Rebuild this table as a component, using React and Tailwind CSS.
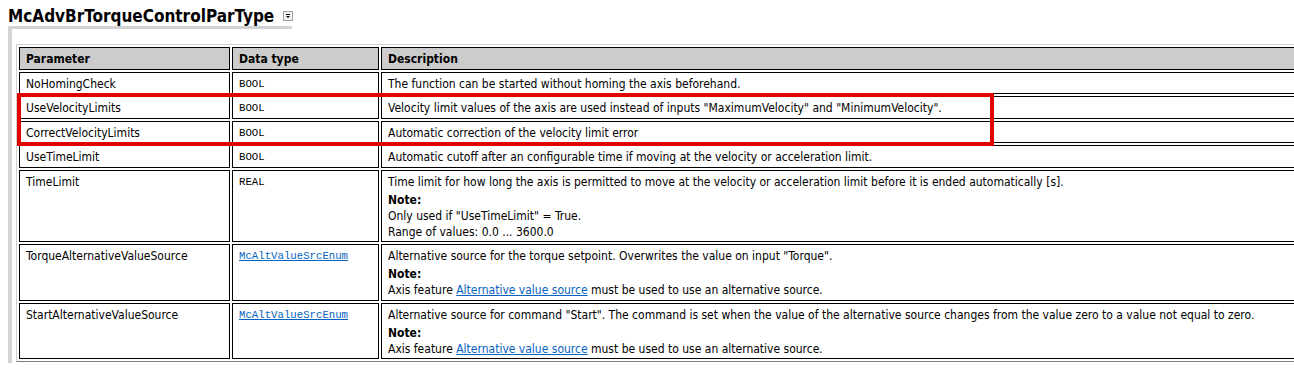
const link = "text-[#0563c1] underline";

const Note = ({ children }) => (
  <>
    <div className="mt-[2px] font-bold">Note:</div>
    {children}
  </>
);

const AltSourceHint = () => (
  <div>
    Axis feature <span className={link}>Alternative value source</span> must be used to use an alternative source.
  </div>
);

const rows = [
  {
    name: "NoHomingCheck",
    type: "BOOL",
    desc: <div>The function can be started without homing the axis beforehand.</div>,
  },
  {
    name: "UseVelocityLimits",
    type: "BOOL",
    desc: (
      <div>
        Velocity limit values of the axis are used instead of inputs "MaximumVelocity" and "MinimumVelocity".
      </div>
    ),
  },
  {
    name: "CorrectVelocityLimits",
    type: "BOOL",
    desc: <div>Automatic correction of the velocity limit error</div>,
  },
  {
    name: "UseTimeLimit",
    type: "BOOL",
    desc: <div>Automatic cutoff after an configurable time if moving at the velocity or acceleration limit.</div>,
  },
  {
    name: "TimeLimit",
    type: "REAL",
    desc: (
      <>
        <div>
          Time limit for how long the axis is permitted to move at the velocity or acceleration limit before it is
          ended automatically [s].
        </div>
        <Note>
          <div>Only used if "UseTimeLimit" = True.</div>
          <div>Range of values: 0.0 ... 3600.0</div>
        </Note>
      </>
    ),
  },
  {
    name: "TorqueAlternativeValueSource",
    type: "McAltValueSrcEnum",
    isLink: true,
    desc: (
      <>
        <div>Alternative source for the torque setpoint. Overwrites the value on input "Torque".</div>
        <Note>
          <AltSourceHint />
        </Note>
      </>
    ),
  },
  {
    name: "StartAlternativeValueSource",
    type: "McAltValueSrcEnum",
    isLink: true,
    desc: (
      <>
        <div>
          Alternative source for command "Start". The command is set when the value of the alternative source changes
          from the value zero to a value not equal to zero.
        </div>
        <Note>
          <AltSourceHint />
        </Note>
      </>
    ),
  },
];

function CollapseIcon() {
  return (
    <svg width="10" height="10" viewBox="0 0 10 10" className="ml-[9px] mt-[4px] shrink-0">
      <rect x="0.5" y="0.5" width="9" height="9" fill="#f4f4f4" stroke="#a0a0a0" />
      <rect x="3" y="3" width="4" height="1" fill="#000" />
      <path d="M3 5 H7 L5 7 Z" fill="#000" />
    </svg>
  );
}

export default function App() {
  const cell = "border border-black px-[6px] pt-[3px] pb-[1.5px] align-top text-left leading-4";

  return (
    <div
      className="relative w-[1294px] h-[370px] overflow-hidden bg-white text-black text-[12px]"
      style={{ fontFamily: '"DejaVu Sans Condensed", "Liberation Sans", sans-serif' }}
    >
      <div className="pt-[7px] pl-[8px]">
        <div className="flex w-[284px] items-start border-b-[3px] border-[#d3d3d3] pb-[1px]">
          <h1 className="text-[17px] font-bold leading-[18px] whitespace-nowrap">McAdvBrTorqueControlParType</h1>
          <CollapseIcon />
        </div>

        <div className="border-l-4 border-[#d3d3d3] pl-[4px] pt-[15px] pb-[1px]">
          <table className="table-fixed border-separate border-spacing-[2px] border border-t-[#d0d0d0] border-l-[#d0d0d0] border-r-[#808080] border-b-[#808080] w-[1308px]">
            <colgroup>
              <col className="w-[211px]" />
              <col className="w-[147px]" />
              <col className="w-[940px]" />
            </colgroup>
            <thead>
              <tr className="bg-[#cccccc] font-bold">
                <th className={cell}>Parameter</th>
                <th className={cell}>Data type</th>
                <th className={cell}>Description</th>
              </tr>
            </thead>
            <tbody>
              {rows.map((r) => (
                <tr key={r.name}>
                  <td className={cell}>{r.name}</td>
                  <td className={cell}>
                    <div
                      className={`text-[10.7px] leading-4 ${r.isLink ? link : ""}`}
                      style={{ fontFamily: '"Liberation Mono", monospace' }}
                    >
                      {r.type}
                    </div>
                  </td>
                  <td className={cell}>{r.desc}</td>
                </tr>
              ))}
            </tbody>
          </table>
        </div>
      </div>

      {/* red highlight around the velocity limit rows */}
      <div className="pointer-events-none absolute left-[17px] top-[93px] h-[53px] w-[977px] border-4 border-[#e00000]" />
    </div>
  );
}
